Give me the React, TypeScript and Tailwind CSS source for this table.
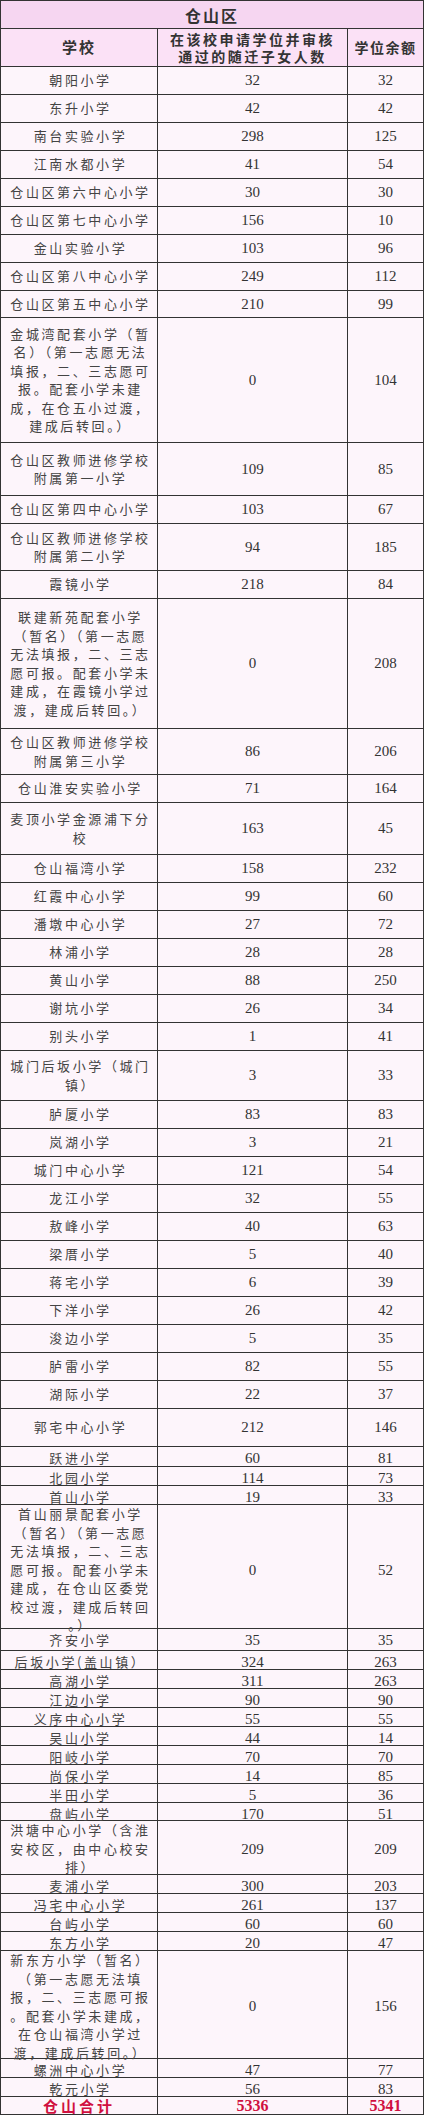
import React from "react";

type Row = { name: string[]; a: string; b: string; h: string };

const rows: Row[] = [
  { name: ["朝阳小学"], a: "32", b: "32", h: "h-[28px]" },
  { name: ["东升小学"], a: "42", b: "42", h: "h-[28px]" },
  { name: ["南台实验小学"], a: "298", b: "125", h: "h-[28px]" },
  { name: ["江南水都小学"], a: "41", b: "54", h: "h-[28px]" },
  { name: ["仓山区第六中心小学"], a: "30", b: "30", h: "h-[28px]" },
  { name: ["仓山区第七中心小学"], a: "156", b: "10", h: "h-[28px]" },
  { name: ["金山实验小学"], a: "103", b: "96", h: "h-[28px]" },
  { name: ["仓山区第八中心小学"], a: "249", b: "112", h: "h-[28px]" },
  { name: ["仓山区第五中心小学"], a: "210", b: "99", h: "h-[27px]" },
  {
    name: ["金城湾配套小学（暂", "名）（第一志愿无法", "填报，二、三志愿可", "报。配套小学未建", "成，在仓五小过渡，", "建成后转回。）"],
    a: "0",
    b: "104",
    h: "h-[125px]",
  },
  { name: ["仓山区教师进修学校", "附属第一小学"], a: "109", b: "85", h: "h-[53px]" },
  { name: ["仓山区第四中心小学"], a: "103", b: "67", h: "h-[28px]" },
  { name: ["仓山区教师进修学校", "附属第二小学"], a: "94", b: "185", h: "h-[47px]" },
  { name: ["霞镜小学"], a: "218", b: "84", h: "h-[28px]" },
  {
    name: ["联建新苑配套小学", "（暂名）（第一志愿", "无法填报，二、三志", "愿可报。配套小学未", "建成，在霞镜小学过", "渡，建成后转回。）"],
    a: "0",
    b: "208",
    h: "h-[130px]",
  },
  { name: ["仓山区教师进修学校", "附属第三小学"], a: "86", b: "206", h: "h-[46px]" },
  { name: ["仓山淮安实验小学"], a: "71", b: "164", h: "h-[28px]" },
  { name: ["麦顶小学金源浦下分", "校"], a: "163", b: "45", h: "h-[52px]" },
  { name: ["仓山福湾小学"], a: "158", b: "232", h: "h-[28px]" },
  { name: ["红霞中心小学"], a: "99", b: "60", h: "h-[28px]" },
  { name: ["潘墩中心小学"], a: "27", b: "72", h: "h-[28px]" },
  { name: ["林浦小学"], a: "28", b: "28", h: "h-[28px]" },
  { name: ["黄山小学"], a: "88", b: "250", h: "h-[28px]" },
  { name: ["谢坑小学"], a: "26", b: "34", h: "h-[28px]" },
  { name: ["别头小学"], a: "1", b: "41", h: "h-[28px]" },
  { name: ["城门后坂小学（城门", "镇）"], a: "3", b: "33", h: "h-[50px]" },
  { name: ["胪厦小学"], a: "83", b: "83", h: "h-[28px]" },
  { name: ["岚湖小学"], a: "3", b: "21", h: "h-[28px]" },
  { name: ["城门中心小学"], a: "121", b: "54", h: "h-[28px]" },
  { name: ["龙江小学"], a: "32", b: "55", h: "h-[28px]" },
  { name: ["敖峰小学"], a: "40", b: "63", h: "h-[28px]" },
  { name: ["梁厝小学"], a: "5", b: "40", h: "h-[28px]" },
  { name: ["蒋宅小学"], a: "6", b: "39", h: "h-[28px]" },
  { name: ["下洋小学"], a: "26", b: "42", h: "h-[28px]" },
  { name: ["浚边小学"], a: "5", b: "35", h: "h-[28px]" },
  { name: ["胪雷小学"], a: "82", b: "55", h: "h-[28px]" },
  { name: ["湖际小学"], a: "22", b: "37", h: "h-[28px]" },
  { name: ["郭宅中心小学"], a: "212", b: "146", h: "h-[38px]" },
  { name: ["跃进小学"], a: "60", b: "81", h: "h-[20px]" },
  { name: ["北园小学"], a: "114", b: "73", h: "h-[19px]" },
  { name: ["首山小学"], a: "19", b: "33", h: "h-[19px]" },
  {
    name: ["首山丽景配套小学", "（暂名）（第一志愿", "无法填报，二、三志", "愿可报。配套小学未", "建成，在仓山区委党", "校过渡，建成后转回", "。）"],
    a: "0",
    b: "52",
    h: "h-[124px]",
  },
  { name: ["齐安小学"], a: "35", b: "35", h: "h-[22px]" },
  { name: ["后坂小学(盖山镇）"], a: "324", b: "263", h: "h-[19px]" },
  { name: ["高湖小学"], a: "311", b: "263", h: "h-[19px]" },
  { name: ["江边小学"], a: "90", b: "90", h: "h-[19px]" },
  { name: ["义序中心小学"], a: "55", b: "55", h: "h-[19px]" },
  { name: ["吴山小学"], a: "44", b: "14", h: "h-[19px]" },
  { name: ["阳岐小学"], a: "70", b: "70", h: "h-[19px]" },
  { name: ["尚保小学"], a: "14", b: "85", h: "h-[19px]" },
  { name: ["半田小学"], a: "5", b: "36", h: "h-[19px]" },
  { name: ["盘屿小学"], a: "170", b: "51", h: "h-[18px]" },
  { name: ["洪塘中心小学（含淮", "安校区，由中心校安", "排）"], a: "209", b: "209", h: "h-[54px]" },
  { name: ["麦浦小学"], a: "300", b: "203", h: "h-[19px]" },
  { name: ["冯宅中心小学"], a: "261", b: "137", h: "h-[19px]" },
  { name: ["台屿小学"], a: "60", b: "60", h: "h-[19px]" },
  { name: ["东方小学"], a: "20", b: "47", h: "h-[19px]" },
  {
    name: ["新东方小学（暂名）", "（第一志愿无法填", "报，二、三志愿可报", "。配套小学未建成，", "在仓山福湾小学过", "渡，建成后转回。）"],
    a: "0",
    b: "156",
    h: "h-[108px]",
  },
  { name: ["螺洲中心小学"], a: "47", b: "77", h: "h-[19px]" },
  { name: ["乾元小学"], a: "56", b: "83", h: "h-[19px]" },
];

const cjk = "font-['Noto_Sans_CJK_SC',sans-serif]";
const num = "font-['Liberation_Serif',serif] text-[15px] text-[#333]";

export default function App() {
  return (
    <div className="w-[424px] bg-[#fdf5fb] min-h-[2115px]">
      {/* 标题 */}
      <div
        className={`h-[29px] border border-[#333] bg-[#f6d6f1] flex items-center justify-center ${cjk} text-[16px] font-bold tracking-[2px] text-[#333]`}
      >
        仓山区
      </div>

      {/* 表头 */}
      <div className={`grid grid-cols-[157px_190px_75px] h-[38px] border-x border-b border-[#333] bg-[#fbe1f6] ${cjk} text-[#333] font-bold`}>
        <div className="flex items-center justify-center border-r border-[#333] text-[15px] tracking-[2px]">学校</div>
        <div className="flex flex-col items-center justify-center border-r border-[#333] text-[14px] leading-[17px] tracking-[2.5px]">
          <span>在该校申请学位并审核</span>
          <span>通过的随迁子女人数</span>
        </div>
        <div className="flex items-center justify-center text-[14px] tracking-[1.5px]">学位余额</div>
      </div>

      {rows.map((r, i) => (
        <div key={i} className={`grid grid-cols-[157px_190px_75px] border-x border-b border-[#333] ${r.h}`}>
          <div
            className={`flex flex-col items-center justify-center border-r border-[#333] pl-[3px] ${cjk} text-[13px] leading-[18.5px] tracking-[2.6px] text-[#444] whitespace-nowrap`}
          >
            {r.name.map((line, j) => (
              <span key={j}>{line}</span>
            ))}
          </div>
          <div className={`flex items-center justify-center border-r border-[#333] ${num}`}>{r.a}</div>
          <div className={`flex items-center justify-center ${num}`}>{r.b}</div>
        </div>
      ))}

      {/* 合计 */}
      <div className="grid grid-cols-[157px_190px_75px] h-[18px] border-x border-b border-[#333] text-[#d01040] font-bold">
        <div className={`flex items-center justify-center border-r border-[#333] ${cjk} text-[15px] tracking-[3px] leading-none`}>仓山合计</div>
        <div className="flex items-center justify-center border-r border-[#333] font-['Liberation_Serif',serif] text-[16px] leading-none">5336</div>
        <div className="flex items-center justify-center font-['Liberation_Serif',serif] text-[16px] leading-none">5341</div>
      </div>
    </div>
  );
}
